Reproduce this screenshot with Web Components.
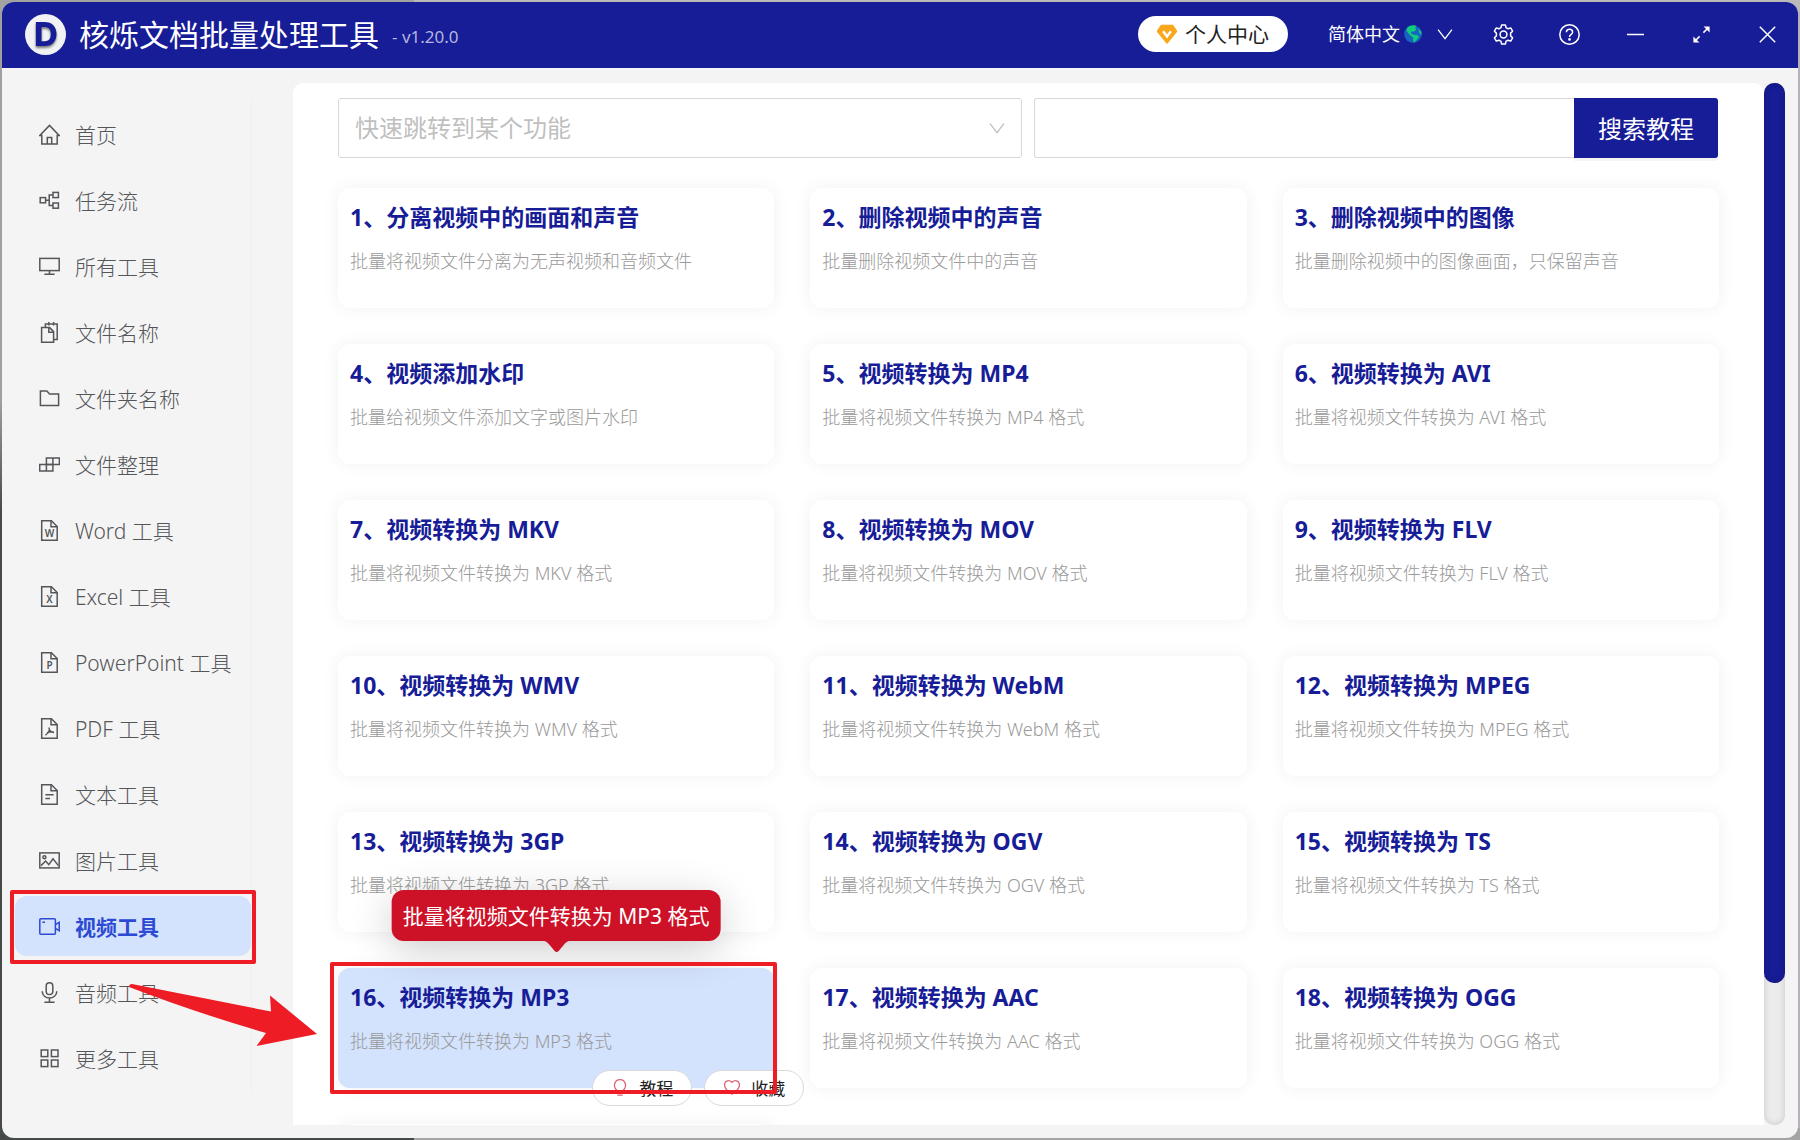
<!DOCTYPE html>
<html lang="zh-CN">
<head>
<meta charset="utf-8">
<title>核烁文档批量处理工具</title>
<style>
  html, body {
    margin: 0;
    height: 100%;
  }

  body {
    --brand: #171c97;
    --mark: #ee1c24;
    --surface: #f4f4f4;
    box-sizing: border-box;
    padding: 2px;
    overflow: hidden;
    font-family: "Noto Sans", "Noto Sans CJK SC", sans-serif;
    color: #54565a;
    background:
      linear-gradient(90deg, #444a48 23%, #a4a4a4 23%) bottom / 100% 12px no-repeat,
      linear-gradient(90deg, #a2a2a2 23%, #bababa 23%) top / 100% 12px no-repeat,
      linear-gradient(180deg, #a0a0a0 35%, #444a48 45%) left / 12px 100% no-repeat,
      #b4b2b8;
  }
</style>
</head>
<body>
<app-window>
  <title-bar slot="header" name="核烁文档批量处理工具" version="- v1.20.0"></title-bar>

  <side-nav slot="nav">
    <nav-item icon="home">首页</nav-item>
    <nav-item icon="flow">任务流</nav-item>
    <nav-item icon="monitor">所有工具</nav-item>
    <nav-item icon="files">文件名称</nav-item>
    <nav-item icon="folder">文件夹名称</nav-item>
    <nav-item icon="blocks">文件整理</nav-item>
    <nav-item icon="word">Word 工具</nav-item>
    <nav-item icon="excel">Excel 工具</nav-item>
    <nav-item icon="ppt">PowerPoint 工具</nav-item>
    <nav-item icon="pdf">PDF 工具</nav-item>
    <nav-item icon="text">文本工具</nav-item>
    <nav-item icon="image">图片工具</nav-item>
    <nav-item icon="video" active>视频工具</nav-item>
    <nav-item icon="mic">音频工具</nav-item>
    <nav-item icon="grid">更多工具</nav-item>
  </side-nav>

  <search-bar></search-bar>
  <tool-grid></tool-grid>
</app-window>

<script>
// Line icons, drawn on a 21x21 grid
const sheet = '<path d="M2.7 .8H12.4L18.2 6.5V20.2H2.7Z"/><path d="M12 .8V6.8H18.2"/>';
const letter = (c) => `<text x="10.5" y="16.5" text-anchor="middle" font-size="10" font-weight="600" fill="currentColor" stroke="none">${c}</text>`;

const ICONS = {
  home: '<path d="M.8 11.4 10.5 1.4 20.2 11.4H18.2V20H2.8V11.4Z"/><path d="M8.3 20V13.6H12.7V20"/>',
  flow: '<rect x="1.2" y="7.6" width="5.4" height="5.2"/><rect x="14" y="2.4" width="5.4" height="5.2"/><rect x="14" y="13" width="5.4" height="5.2"/><path d="M6.6 10.2H10.2M14 5H10.2V15.6H14"/>',
  monitor: '<rect x=".8" y="2.4" width="19.4" height="12.2"/><path d="M10.5 14.6V18.2M5.4 18.2H15.6"/>',
  files: '<path d="M2.6 5.6H10.6L14.6 9.6V20.2H2.6Z"/><path d="M9.8 5.6V10.2H14.6"/><path d="M6.4 5.4V2H18.2V17.4H14.8M9.8 0V3.6M14.6 0V3.6"/>',
  folder: '<path d="M1.4 17.4V2.9H7.8L10.6 5.9H19.6V17.4Z"/>',
  blocks: '<rect x="7.4" y="4" width="13" height="6.5"/><rect x=".7" y="10.5" width="13.2" height="6.5"/><path d="M13.9 4V10.5M7.4 10.5V17"/>',
  word: sheet + letter('W'),
  excel: sheet + letter('X'),
  ppt: sheet + letter('P'),
  pdf: sheet + '<path d="M10.2 9.4C9.6 11 11 14.4 15 14.6M10.6 11.6C10 14 8.2 16.2 6.4 17.2M8 14.8C10 13.8 12.4 13.6 15 14.2"/>',
  text: sheet + '<path d="M6.4 10.8H14.6M6.4 14.4H11"/>',
  image: '<rect x=".8" y="2.9" width="19.4" height="15"/><circle cx="5.4" cy="7.2" r="1.5"/><path d="M2 15.6 6.6 11 9.8 14.6 14 8.8 19.4 15.6"/>',
  video: '<rect x=".8" y="2.7" width="15.6" height="15.6" rx="1"/><path d="M16.4 8.6 20.2 6.4V14.6L16.4 12.4M3.4 6.2H6"/>',
  mic: '<rect x="7.2" y=".8" width="6.6" height="11.8" rx="3.3"/><path d="M3.2 9.2C3.2 18.2 17.8 18.2 17.8 9.2M10.5 16V20M5.4 20.2H15.6"/>',
  grid: '<rect x="2.2" y="2" width="6.6" height="6.6"/><rect x="12.4" y="2" width="6.6" height="6.6"/><rect x="2.2" y="12" width="6.6" height="6.6"/><rect x="12.4" y="12" width="6.6" height="6.6"/>',
  chevron: '<path d="M2.4 5.4 10.5 16 18.6 5.4"/>',
  gear: '<path d="M8.6 .9H12.4L13 3.6 15 4.8 17.7 3.9 19.6 7.2 17.6 9.1V11.9L19.6 13.8 17.7 17.1 15 16.2 13 17.4 12.4 20.1H8.6L8 17.4 6 16.2 3.3 17.1 1.4 13.8 3.4 11.9V9.1L1.4 7.2 3.3 3.9 6 4.8 8 3.6Z" stroke-linejoin="round"/><circle cx="10.5" cy="10.5" r="3.4"/>',
  help: '<circle cx="10.5" cy="10.5" r="9.7"/><path d="M7.4 8.2C7.4 4.4 13.6 4.4 13.6 8.2 13.6 10.4 10.5 10.2 10.5 13"/><circle cx="10.5" cy="15.4" r=".6" fill="currentColor"/>',
  minus: '<path d="M2 10.5H19"/>',
  expand: '<path d="M12.4 8.6 17 4M8.6 12.4 4 17"/><path d="M12.6 2.6H18.6V8.4ZM2.4 12.6V18.4H8.4Z" fill="currentColor" stroke="none"/>',
  close: '<path d="M2.8 2.8 18.2 18.2M18.2 2.8 2.8 18.2"/>',
  bulb: '<path d="M7.4 15C1 9.6 4.6 2 10.5 2S20 9.6 13.6 15V17H7.4ZM7.4 20H13.6"/>',
  heart: '<path d="M10.5 19C-4 10 2.6-1 10.5 4.8 18.4-1 25 10 10.5 19Z"/>',
  gem: '<path d="M4.6 1.6H16.4L20.6 7.6 10.5 20 .4 7.6Z" fill="#f9a81c" stroke="#f9a81c" stroke-linejoin="round"/><path d="M6.4 7.6 10.5 13 14.6 7.6" stroke="#fff" stroke-width="2.6"/>',
  globe: '<circle cx="10.5" cy="10.5" r="10.3" fill="#1765c1" stroke="none"/><path d="M4 3C7 .4 12-.6 14.6 1.2L13 3.6 14.4 5.6 11 8 8.6 7.4 8 10 11.6 11.4 16 12 17.4 14.4 13.4 18.6 12.6 20.4 11 19.6 10.6 14.6 6.6 11.4 3 6.6ZM17 4 20 8 20.6 11.4 18 9.6Z" fill="#0fce7c" stroke="none"/>'
};

class UiIcon extends HTMLElement {
  connectedCallback() {
    this.attachShadow({ mode: 'open' }).innerHTML = `
      <style>
        :host {
          display: block;
          flex: none;
          width: var(--size, 21px);
          height: var(--size, 21px);
        }

        svg {
          display: block;
          width: 100%;
          height: 100%;
        }
      </style>
      <svg viewBox="0 0 21 21" fill="none" stroke="currentColor" stroke-width="1.5" aria-hidden="true">${ICONS[this.getAttribute('name')]}</svg>
    `;
  }
}

// Red frame laid round its positioned parent; "arrow" adds the pointer
class MarkFrame extends HTMLElement {
  connectedCallback() {
    this.attachShadow({ mode: 'open' }).innerHTML = `
      <style>
        :host {
          display: block;
          position: absolute;
          inset: -6px -5px -8px;
          z-index: 5;
          border: 4px solid var(--mark);
          border-radius: 2px;
          pointer-events: none;
        }

        svg {
          position: absolute;
          left: 115px;
          top: 90px;
          width: 188px;
          height: 62px;
        }
      </style>
      ${this.hasAttribute('arrow') ? '<svg viewBox="0 0 188 62"><path d="M0 3Q0 0 3 0L142 27.5 141 11.5 188 50 127.5 62 137 49Q65 28 0 3Z" fill="#ee1c24"/></svg>' : ''}
    `;
  }
}

class AppWindow extends HTMLElement {
  constructor() {
    super();
    this.attachShadow({ mode: 'open' }).innerHTML = `
      <style>
        :host {
          display: flex;
          flex-direction: column;
          height: 100%;
          border-radius: 12px;
          overflow: hidden;
          background: var(--surface);
        }

        .body {
          flex: 1;
          min-height: 0;
          display: flex;
          padding-right: 13px;
        }

        main {
          flex: 1;
          min-width: 0;
          box-sizing: border-box;
          margin: 15px 0 13px;
          padding: 15px 45px 0;
          border-radius: 10px 10px 0 0;
          background: #fff;
          overflow: hidden;
        }

        .rail {
          display: grid;
          grid-template-rows: 19fr 3fr;
          width: 21px;
          margin: 15px 0 13px;
          border-radius: 10px;
          background: #ebebeb;
          box-shadow: inset 0 0 6px rgba(0, 0, 0, 0.15);
        }

        .thumb {
          border-radius: 10px;
          background: var(--brand);
          box-shadow: inset 0 0 6px rgba(0, 0, 0, 0.2);
        }
      </style>
      <slot name="header"></slot>
      <div class="body">
        <slot name="nav"></slot>
        <main><slot></slot></main>
        <div class="rail"><div class="thumb"></div></div>
      </div>
    `;
  }
}

class TitleBar extends HTMLElement {
  connectedCallback() {
    this.attachShadow({ mode: 'open' }).innerHTML = `
      <style>
        :host {
          display: flex;
          align-items: center;
          flex: none;
          height: 66px;
          box-sizing: border-box;
          padding: 0 20px 2px 23px;
          background: var(--brand);
          color: #fff;
        }

        .logo {
          width: 41px;
          height: 41px;
        }

        .logo text {
          font-family: Inter, sans-serif;
          font-size: 33px;
          font-weight: 800;
          filter: drop-shadow(0 2px 1px rgba(0, 0, 0, 0.5));
        }

        h1 {
          margin: 2px 0 0 13px;
          font-size: 30px;
          font-weight: 400;
          line-height: 40px;
        }

        .version {
          margin: 4px auto 0 13px;
          font-size: 17px;
          color: #b3b6de;
        }

        button {
          border: 0;
          padding: 0;
          background: none;
          color: inherit;
          font: inherit;
          cursor: pointer;
        }

        .user {
          --size: 20px;
          display: flex;
          align-items: center;
          gap: 8px;
          height: 36px;
          padding: 0 19px;
          border-radius: 18px;
          background: #fff;
          color: #222;
          font-size: 21px;
          line-height: 36px;
        }

        .lang {
          --size: 18px;
          display: flex;
          align-items: center;
          margin-left: 40px;
        }

        .lang select {
          appearance: none;
          border: 0;
          padding: 0;
          margin-right: 4px;
          background: none;
          color: #fff;
          font: inherit;
          font-size: 18px;
          line-height: 26px;
        }

        .lang .arrow {
          margin-left: 14px;
        }

        .actions {
          display: flex;
          gap: 45px;
          margin-left: 39px;
        }
      </style>
      <svg class="logo" viewBox="0 0 41 41" role="img" aria-label="logo">
        <circle cx="20.5" cy="20.5" r="20.5" fill="#f1f2f4"/>
        <text x="21" y="32" text-anchor="middle" fill="#171c97">D</text>
      </svg>
      <h1>${this.getAttribute('name')}</h1>
      <span class="version">${this.getAttribute('version')}</span>
      <button class="user"><ui-icon name="gem"></ui-icon>个人中心</button>
      <div class="lang">
        <select aria-label="语言"><option>简体中文</option></select>
        <ui-icon name="globe"></ui-icon>
        <ui-icon class="arrow" name="chevron"></ui-icon>
      </div>
      <div class="actions">
        <button aria-label="设置"><ui-icon name="gear"></ui-icon></button>
        <button aria-label="帮助"><ui-icon name="help"></ui-icon></button>
        <button aria-label="最小化"><ui-icon name="minus"></ui-icon></button>
        <button aria-label="最大化"><ui-icon name="expand"></ui-icon></button>
        <button aria-label="关闭"><ui-icon name="close"></ui-icon></button>
      </div>
    `;
  }
}

class SideNav extends HTMLElement {
  constructor() {
    super();
    this.attachShadow({ mode: 'open' }).innerHTML = `
      <style>
        :host {
          display: flex;
          flex: none;
          position: relative;
          z-index: 2;
          padding: 30px 41px 47px 13px;
        }

        nav {
          display: flex;
          flex-direction: column;
          gap: 6px;
          width: 236px;
          padding-top: 6px;
          border-right: 1px solid #efefef;
        }
      </style>
      <nav><slot></slot></nav>
    `;
  }
}

class NavItem extends HTMLElement {
  connectedCallback() {
    this.attachShadow({ mode: 'open' }).innerHTML = `
      <style>
        :host {
          display: block;
          position: relative;
        }

        a {
          display: flex;
          align-items: center;
          gap: 15px;
          height: 60px;
          padding-left: 24px;
          border-radius: 12px;
          color: inherit;
          text-decoration: none;
          font-size: 21px;
          font-weight: 300;
          white-space: nowrap;
        }

        a:hover {
          background: #eaf1fe;
        }

        :host([active]) a {
          background: #d3e2fd;
          color: #2c4ad3;
          font-weight: 700;
        }
      </style>
      <a href="#"><ui-icon name="${this.getAttribute('icon')}"></ui-icon><slot></slot></a>
      ${this.hasAttribute('active') ? '<mark-frame arrow></mark-frame>' : ''}
    `;
  }
}

class SearchBar extends HTMLElement {
  constructor() {
    super();
    this.attachShadow({ mode: 'open' }).innerHTML = `
      <style>
        :host {
          display: grid;
          grid-template-columns: 1fr 1fr;
          gap: 12px;
          height: 60px;
          margin: 0 1px 30px 0;
          font-size: 24px;
        }

        .jump {
          display: grid;
          align-items: center;
        }

        .jump > * {
          grid-area: 1 / 1;
        }

        .jump ui-icon {
          --size: 18px;
          justify-self: end;
          margin-right: 16px;
          color: #bfbfbf;
          pointer-events: none;
        }

        select, input {
          box-sizing: border-box;
          width: 100%;
          height: 60px;
          min-width: 0;
          margin: 0;
          padding: 0 16px;
          border: 1px solid #d9d9d9;
          border-radius: 3px;
          background: #fff;
          font: inherit;
        }

        select {
          appearance: none;
          padding-bottom: 2px;
          color: #bfbfbf;
        }

        form {
          display: flex;
        }

        input {
          flex: 1;
          border-right: 0;
          border-radius: 3px 0 0 3px;
          outline: 0;
        }

        button {
          flex: none;
          height: 60px;
          padding: 0 24px 2px;
          border: 0;
          border-radius: 0 3px 3px 0;
          background: var(--brand);
          box-shadow: 0 3px 0 rgba(0, 0, 0, 0.04);
          color: #fff;
          font: inherit;
          cursor: pointer;
        }
      </style>
      <div class="jump">
        <select aria-label="快速跳转到某个功能"><option>快速跳转到某个功能</option></select>
        <ui-icon name="chevron"></ui-icon>
      </div>
      <form>
        <input type="text" aria-label="搜索教程">
        <button type="button">搜索教程</button>
      </form>
    `;
  }
}

class ToolCard extends HTMLElement {
  connectedCallback() {
    const active = this.hasAttribute('active');
    const desc = this.getAttribute('desc') || '';

    this.attachShadow({ mode: 'open' }).innerHTML = `
      <style>
        :host {
          display: block;
          position: relative;
        }

        a {
          display: block;
          box-sizing: border-box;
          min-height: 120px;
          padding: 11px 12px;
          border-radius: 12px;
          background: #fff;
          box-shadow: 0 0 18px rgba(0, 0, 0, 0.06);
          color: #9a9a9a;
          text-decoration: none;
        }

        :host([active]) a {
          background: #d3e2fd;
        }

        h2 {
          margin: 0 0 8px;
          color: var(--brand);
          font-size: 23px;
          font-weight: 700;
          line-height: 36px;
        }

        p {
          margin: 0;
          font-size: 18px;
          font-weight: 300;
          line-height: 36px;
        }

        .tip {
          position: absolute;
          left: 50%;
          bottom: calc(100% + 27px);
          z-index: 3;
          transform: translateX(-50%);
          padding: 10px 11px 8px;
          border-radius: 12px;
          background: #cd1126;
          box-shadow: 0 9px 42px rgba(0, 0, 0, 0.2);
          color: #fff;
          font-size: 21px;
          line-height: 33px;
          white-space: nowrap;
        }

        .tip svg {
          position: absolute;
          left: 50%;
          top: 100%;
          width: 28px;
          height: 11px;
          margin-left: -14px;
        }

        .actions {
          position: absolute;
          right: -30px;
          bottom: -18px;
          z-index: 3;
          display: flex;
          gap: 12px;
        }

        .actions button {
          --size: 18px;
          display: flex;
          align-items: center;
          justify-content: center;
          gap: 10px;
          width: 100px;
          height: 36px;
          border: 1px solid #d9d9d9;
          border-radius: 18px;
          padding: 0 0 2px;
          background: #fff;
          color: #222;
          font: inherit;
          font-size: 17px;
          cursor: pointer;
        }

        .actions ui-icon {
          color: #dc6070;
        }

        mark-frame {
          inset: -6px -3px -6px -8px;
        }
      </style>
      <a href="#">
        <h2>${this.getAttribute('name') || ''}</h2>
        <p>${desc}</p>
      </a>
      ${active ? `
        <div class="tip" role="tooltip">${desc}<svg viewBox="0 0 28 11"><path d="M0 0C4 0 5 2 7 4L12 10Q14 12 16 10L21 4C23 2 24 0 28 0Z" fill="#cd1126"/></svg></div>
        <div class="actions">
          <button><ui-icon name="bulb"></ui-icon>教程</button>
          <button><ui-icon name="heart"></ui-icon>收藏</button>
        </div>
        <mark-frame></mark-frame>
      ` : ''}
    `;
  }
}

class ToolGrid extends HTMLElement {
  connectedCallback() {
    const tools = [
      ['分离视频中的画面和声音', '批量将视频文件分离为无声视频和音频文件'],
      ['删除视频中的声音', '批量删除视频文件中的声音'],
      ['删除视频中的图像', '批量删除视频中的图像画面，只保留声音'],
      ['视频添加水印', '批量给视频文件添加文字或图片水印']
    ];
    const formats = ['MP4', 'AVI', 'MKV', 'MOV', 'FLV', 'WMV', 'WebM', 'MPEG', '3GP', 'OGV', 'TS', 'MP3', 'AAC', 'OGG'];
    formats.forEach((f) => tools.push([`视频转换为 ${f}`, `批量将视频文件转换为 ${f} 格式`]));

    const cards = tools.map(([name, desc], i) =>
      `<tool-card name="${i + 1}、${name}" desc="${desc}" ${name.endsWith('MP3') ? 'active' : ''}></tool-card>`
    ).join('');

    this.attachShadow({ mode: 'open' }).innerHTML = `
      <style>
        :host {
          display: grid;
          grid-template-columns: repeat(3, 1fr);
          gap: 36px;
        }
      </style>
      ${cards}
      <tool-card></tool-card>
    `;
  }
}

customElements.define('ui-icon', UiIcon);
customElements.define('mark-frame', MarkFrame);
customElements.define('app-window', AppWindow);
customElements.define('title-bar', TitleBar);
customElements.define('side-nav', SideNav);
customElements.define('nav-item', NavItem);
customElements.define('search-bar', SearchBar);
customElements.define('tool-card', ToolCard);
customElements.define('tool-grid', ToolGrid);
</script>
</body>
</html>
